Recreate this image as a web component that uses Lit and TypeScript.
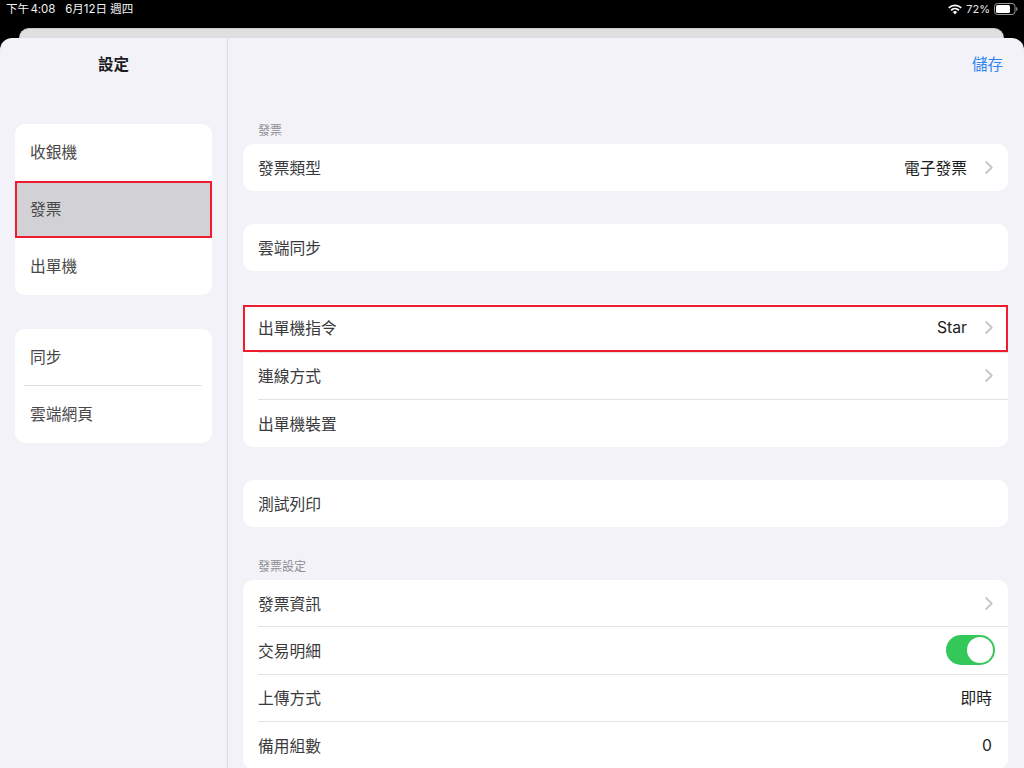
import { LitElement, html, css } from "lit";
import { customElement } from "lit/decorators.js";

const chevron = html`<svg class="chev" width="8" height="13" viewBox="0 0 8 13"><path d="M1.100 1 6.800 6.500 1.100 12" fill="none" stroke="#c6c6c9" stroke-width="1.800" stroke-linecap="round" stroke-linejoin="round"/></svg>`;

type Row = { label: string; value?: string; chev?: boolean; toggle?: boolean };

@customElement("app-root")
export class AppRoot extends LitElement {
  static styles = css`
    :host { display: block; width: 1024px; height: 768px; overflow: hidden; background: #000;
      font-family: "Inter", "Noto Sans CJK TC", sans-serif; color: #1c1c1e; }
    * { box-sizing: border-box; }
    .status { height: 28px; display: flex; align-items: center; justify-content: space-between;
      padding: 0 6px 10px 6px; color: #f2f2f2; font-size: 11.5px; line-height: 18px; }
    .status .left { display: flex; gap: 10px; }
    .status .time { word-spacing: -1.5px; letter-spacing: -0.1px; }
    .status .right { display: flex; align-items: center; gap: 4px; color: #e6e6e6; font-size: 11px; }
    .back { height: 10px; margin: 0 20px 0 19px; background: #dfdfdf; border-top: 1px solid #c8c8c8; border-radius: 10px 10px 0 0; }
    .sheet { height: 730px; background: #f2f2f8; border-radius: 12px 12px 0 0; display: flex; overflow: hidden; }
    .side { width: 228px; flex: none; border-right: 1px solid #dcdce0; padding: 0 15px; }
    .title { height: 86px; padding-top: 16px; text-align: center; font-size: 15.5px; font-weight: 600; line-height: 21px; color: #1c1c1e; }
    .side-card { background: #fff; border-radius: 10px; width: 197px; margin-bottom: 34px; overflow: hidden; }
    .side-row { height: 57px; display: flex; align-items: center; padding: 0 0 3px 15px; font-size: 15.75px; color: #484848; }
    .side-card.compact .side-row:first-child { height: 56px; padding-bottom: 2px; }
    .side-row.sel { background: #d1d1d6; border: 2px solid #ee1c2e; padding: 0 0 3px 13px; }
    .side-sep { height: 1px; background: #e0e0e2; margin-left: 9px; margin-right: 10px; }
    .main { flex: 1; padding: 0 16px 0 15px; }
    .nav { height: 54px; display: flex; align-items: flex-start; justify-content: flex-end; padding-top: 16px; padding-right: 5px;
      color: #2f86f0; font-size: 15.5px; line-height: 21px; }
    .sec { height: 52px; padding: 31px 0 0 15px; font-size: 12px; line-height: 16px; color: #8e8e93; }
    .sec.short { height: 53px; padding-top: 32px; }
    .card { background: #fff; border-radius: 10px; margin-bottom: 33px; position: relative; }
    .card.tight { margin-bottom: 0; }
    .row { height: 47px; display: flex; align-items: center; padding: 0 16px 0 15px; font-size: 15.75px; color: #3a3a3c; position: relative; }
    .card.tall .row { height: 47.67px; }
    .card.wide .row { height: 47.34px; padding-bottom: 1px; }
    .row + .row::before { content: ""; position: absolute; left: 15px; right: 0; top: 0; height: 1px; background: #e3e3e5; }
    .card.wide .row + .row::before { top: -1px; }
    .grow { flex: 1; }
    .val { color: #1c1c1e; }
    .val.chevd { margin-right: 18px; }
    .chev { flex: none; margin-right: -1px; }
    .mark { position: absolute; left: 0; right: 0; top: 1px; height: 47px; border: 2px solid #ee1c2e; pointer-events: none; }
    .toggle { width: 49px; height: 30px; background: #34c759; border-radius: 15px; margin-right: -3px; position: relative; }
    .toggle::after { content: ""; position: absolute; right: 2px; top: 2px; width: 26px; height: 26px; border-radius: 50%; background: #fff; }
  `;

  private row(r: Row) {
    return html`<div class="row">
      <span>${r.label}</span><span class="grow"></span>
      ${r.value ? html`<span class="val ${r.chev ? "chevd" : ""}">${r.value}</span>` : ""}
      ${r.chev ? chevron : ""}
      ${r.toggle ? html`<div class="toggle"></div>` : ""}
    </div>`;
  }

  render() {
    return html`
      <div class="status">
        <div class="left"><span class="time">下午 4:08</span><span>6月12日 週四</span></div>
        <div class="right">
          <svg width="14" height="11" viewBox="0 0 14 11"><path d="M7 10.400 4.900 8.100a3 3 0 0 1 4.200 0Z M3.700 6.900 2.500 5.600a6.600 6.600 0 0 1 9 0l-1.200 1.300a4.800 4.800 0 0 0-6.600 0Z M1.300 4.400.2 3.200a10 10 0 0 1 13.600 0l-1.100 1.200a8.300 8.300 0 0 0-11.400 0Z" fill="#fff"/></svg>
          <span>72%</span>
          <svg width="24" height="12" viewBox="0 0 24 12"><rect x=".5" y=".5" width="20.500" height="11" rx="3" fill="none" stroke="#9a9a9a"/><rect x="2" y="2" width="14" height="8" rx="1.500" fill="#fff"/><path d="M22.200 4v4c.8-.3 1.300-1 1.300-2s-.5-1.700-1.300-2Z" fill="#9a9a9a"/></svg>
        </div>
      </div>
      <div class="back"></div>
      <div class="sheet">
        <aside class="side">
          <div class="title">設定</div>
          <div class="side-card">
            <div class="side-row">收銀機</div>
            <div class="side-row sel">發票</div>
            <div class="side-row">出單機</div>
          </div>
          <div class="side-card compact">
            <div class="side-row">同步</div>
            <div class="side-sep"></div>
            <div class="side-row">雲端網頁</div>
          </div>
        </aside>
        <main class="main">
          <div class="nav">儲存</div>
          <div class="sec">發票</div>
          <div class="card">${this.row({ label: "發票類型", value: "電子發票", chev: true })}</div>
          <div class="card">${this.row({ label: "雲端同步" })}</div>
          <div class="card tall">
            ${this.row({ label: "出單機指令", value: "Star", chev: true })}
            ${this.row({ label: "連線方式", chev: true })}
            ${this.row({ label: "出單機裝置" })}
            <div class="mark"></div>
          </div>
          <div class="card tight">${this.row({ label: "測試列印" })}</div>
          <div class="sec short">發票設定</div>
          <div class="card tight wide">
            ${this.row({ label: "發票資訊", chev: true })}
            ${this.row({ label: "交易明細", toggle: true })}
            ${this.row({ label: "上傳方式", value: "即時" })}
            ${this.row({ label: "備用組數", value: "0" })}
          </div>
        </main>
      </div>
    `;
  }
}
